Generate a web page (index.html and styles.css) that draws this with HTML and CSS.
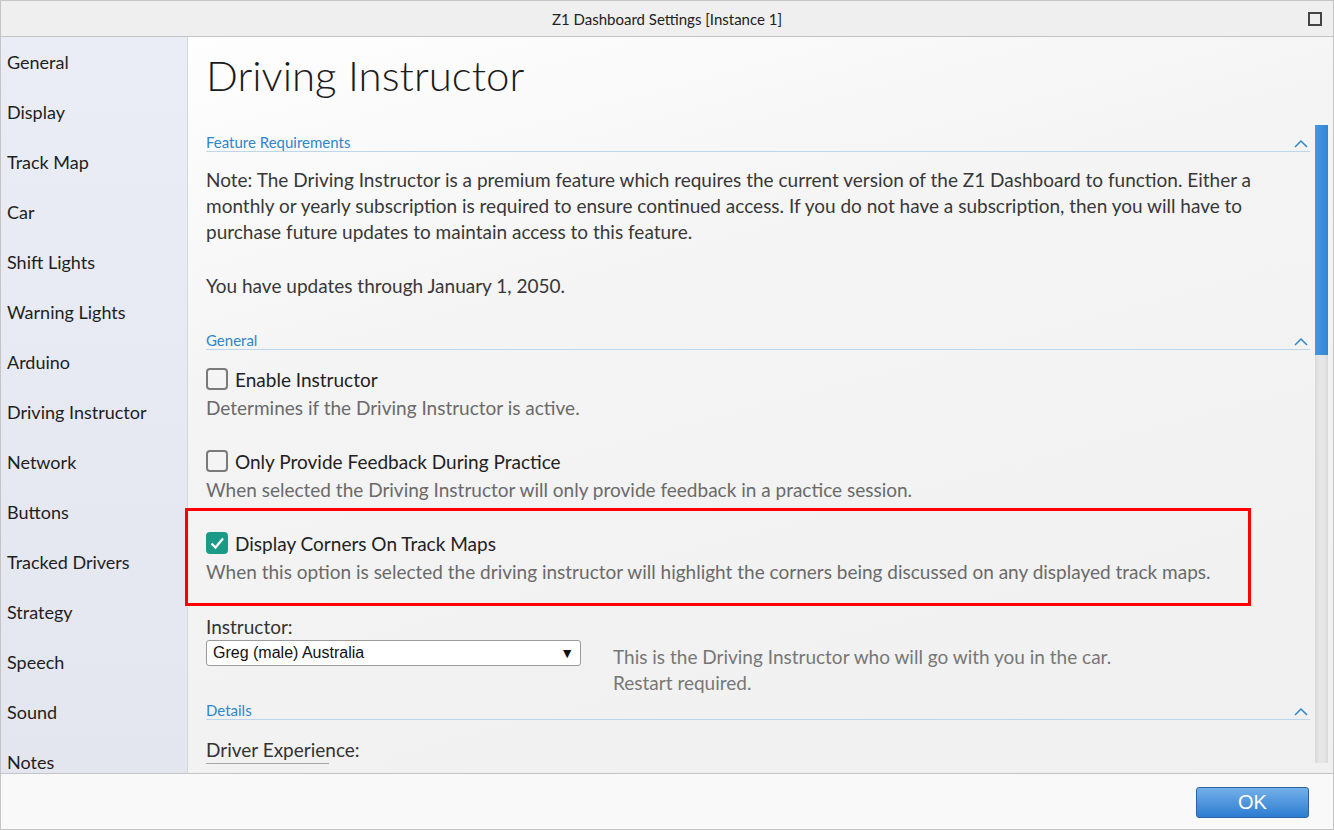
FILE: index.html
```html
<!DOCTYPE html>
<html lang="en">
<head>
    <meta charset="UTF-8">
    <title>Z1 Dashboard Settings [Instance 1]</title>
    <link rel="stylesheet" href="styles.css">
</head>
<body>
    <div class="window">
        <div class="titlebar">
            <span class="title">Z1 Dashboard Settings [Instance 1]</span>
            <span class="maximize"></span>
        </div>

        <div class="main">
            <div class="sidebar">
                <div class="nav-item">General</div>
                <div class="nav-item">Display</div>
                <div class="nav-item">Track Map</div>
                <div class="nav-item">Car</div>
                <div class="nav-item">Shift Lights</div>
                <div class="nav-item">Warning Lights</div>
                <div class="nav-item">Arduino</div>
                <div class="nav-item">Driving Instructor</div>
                <div class="nav-item">Network</div>
                <div class="nav-item">Buttons</div>
                <div class="nav-item">Tracked Drivers</div>
                <div class="nav-item">Strategy</div>
                <div class="nav-item">Speech</div>
                <div class="nav-item">Sound</div>
                <div class="nav-item">Notes</div>
            </div>

            <div class="content">
                <h1>Driving Instructor</h1>
                <div class="scroll">
                    <div class="panel">
                        <div class="section-head section-first">
                            <span>Feature Requirements</span>
                            <svg class="chevron" width="14" height="9" viewBox="0 0 14 9"><path d="M1 8 L7 2 L13 8" fill="none" stroke="#2f86c8" stroke-width="1.5"/></svg>
                        </div>
                        <p class="note">Note: The Driving Instructor is a premium feature which requires the current version of the Z1 Dashboard to function. Either a monthly or yearly subscription is required to ensure continued access. If you do not have a subscription, then you will have to purchase future updates to maintain access to this feature.</p>
                        <p class="note note-updates">You have updates through January 1, 2050.</p>

                        <div class="section-head section-general">
                            <span>General</span>
                            <svg class="chevron" width="14" height="9" viewBox="0 0 14 9"><path d="M1 8 L7 2 L13 8" fill="none" stroke="#2f86c8" stroke-width="1.5"/></svg>
                        </div>

                        <div class="option option-first">
                            <label class="check-row"><span class="checkbox"></span>Enable Instructor</label>
                            <div class="option-desc">Determines if the Driving Instructor is active.</div>
                        </div>
                        <div class="option option-second">
                            <label class="check-row"><span class="checkbox"></span>Only Provide Feedback During Practice</label>
                            <div class="option-desc">When selected the Driving Instructor will only provide feedback in a practice session.</div>
                        </div>

                        <div class="highlight">
                            <div class="option">
                                <label class="check-row"><span class="checkbox checked"><svg width="18" height="18" viewBox="0 0 18 18"><path d="M3.5 9.5 L7.5 13.5 L15 4.5" fill="none" stroke="#fff" stroke-width="2.2"/></svg></span>Display Corners On Track Maps</label>
                                <div class="option-desc">When this option is selected the driving instructor will highlight the corners being discussed on any displayed track maps.</div>
                            </div>
                        </div>

                        <div class="field-label">Instructor:</div>
                        <div class="select-row">
                            <div class="select">
                                <span>Greg (male) Australia</span>
                                <span class="arrow">&#9660;</span>
                            </div>
                            <div class="select-desc">This is the Driving Instructor who will go with you in the car.<br>Restart required.</div>
                        </div>

                        <div class="section-head section-details">
                            <span>Details</span>
                            <svg class="chevron" width="14" height="9" viewBox="0 0 14 9"><path d="M1 8 L7 2 L13 8" fill="none" stroke="#2f86c8" stroke-width="1.5"/></svg>
                        </div>
                        <div class="field-label field-experience">Driver Experience:</div>
                        <div class="experience-box"></div>
                    </div>
                    <div class="scrollbar">
                        <div class="scroll-thumb"></div>
                    </div>
                </div>
            </div>
        </div>

        <div class="footer">
            <button class="ok-button">OK</button>
        </div>
    </div>
</body>
</html>
```

FILE: styles.css
```css
body {
    margin: 0;
    font-family: 'Lato', 'Noto Sans', sans-serif;
    color: #222;
    overflow: hidden;
}
.window {
    width: 1334px;
    height: 830px;
    box-sizing: border-box;
    border: 1px solid #c4c4c4;
    display: flex;
    flex-direction: column;
}
.titlebar {
    height: 35px;
    flex: none;
    background-color: #efefef;
    border-bottom: 1px solid #c4c4c4;
    display: flex;
    align-items: center;
    justify-content: center;
    position: relative;
}
.title {
    font-size: 15px;
    color: #222;
}
.maximize {
    position: absolute;
    right: 11px;
    top: 11px;
    width: 10px;
    height: 10px;
    border: 2px solid #444;
}
.main {
    flex: 1;
    display: flex;
    overflow: hidden;
}
.sidebar {
    width: 186px;
    flex: none;
    background: linear-gradient(180deg, #eaedf6, #e3e6ee);
    border-right: 1px solid #d4d8e0;
}
.nav-item {
    height: 50px;
    line-height: 50px;
    padding-left: 6px;
    font-size: 18px;
    color: #1e1e1e;
}
.content {
    flex: 1;
    display: flex;
    flex-direction: column;
    background: linear-gradient(165deg, #fefefe 0%, #f4f4f4 35%, #f0f0f0 100%);
    min-width: 0;
}
h1 {
    margin: 0;
    height: 88px;
    line-height: 76px;
    padding-left: 18px;
    font-size: 42px;
    font-weight: 300;
    color: #1a1a1a;
    flex: none;
}
.scroll {
    flex: 1;
    display: flex;
    min-height: 0;
}
.panel {
    flex: 1;
    padding-left: 18px;
}
.section-head {
    display: flex;
    justify-content: space-between;
    align-items: flex-end;
    height: 18px;
    line-height: 18px;
    font-size: 15px;
    color: #2f86c8;
    border-bottom: 1px solid #bcd6ec;
}
.chevron {
    margin-right: 2px;
    margin-bottom: 3px;
}
.section-first {
    margin-top: 8px;
}
.note {
    margin: 15px 0 0 0;
    font-size: 19px;
    line-height: 26px;
    color: #383838;
}
.note-updates {
    margin-top: 28px;
}
.section-general {
    margin-top: 32px;
}
.option-first {
    margin-top: 16px;
}
.option-second {
    margin-top: 27px;
}
.check-row {
    display: flex;
    align-items: center;
    height: 26px;
    font-size: 19px;
    color: #222;
}
.checkbox {
    width: 18px;
    height: 18px;
    border: 2px solid #7a7a7a;
    border-radius: 4px;
    margin-right: 7px;
    display: flex;
    align-items: center;
    justify-content: center;
}
.checkbox.checked {
    background-color: #1b9a88;
    border-color: #1b9a88;
}
.option-desc {
    margin-top: 3px;
    font-size: 19px;
    line-height: 26px;
    color: #6a6a6a;
}
.highlight {
    margin: 5px 0 0 -21px;
    width: 1042px;
    border: 3px solid #ff0000;
    padding: 19px 0 18px 18px;
}
.field-label {
    margin-top: 8px;
    font-size: 19px;
    line-height: 26px;
    color: #333;
}
.select-row {
    display: flex;
    gap: 32px;
}
.select {
    width: 361px;
    height: 24px;
    border: 1px solid #9a9a9a;
    border-radius: 3px;
    background-color: #fff;
    display: flex;
    align-items: center;
    justify-content: space-between;
    padding: 0 6px;
    font-family: 'Liberation Sans', Arial, sans-serif;
    font-size: 16px;
    color: #111;
}
.arrow {
    font-size: 14px;
}
.select-desc {
    margin-top: 4px;
    font-size: 19px;
    line-height: 26px;
    color: #777;
}
.section-details {
    margin-top: 5px;
}
.field-experience {
    margin-top: 17px;
}
.experience-box {
    width: 123px;
    border-top: 1px solid #a8a8a8;
}
.scrollbar {
    width: 13px;
    margin: 0 5px 10px 5px;
    background: linear-gradient(90deg, #d8d8d8, #e6e6e6 30%, #e6e6e6 70%, #d8d8d8);
}
.scroll-thumb {
    height: 230px;
    background: linear-gradient(90deg, #4a96de, #2f86d6);
}
.footer {
    height: 55px;
    flex: none;
    border-top: 1px solid #c4c4c4;
    background-color: #f9f9f9;
    display: flex;
    justify-content: flex-end;
    align-items: flex-start;
}
.ok-button {
    margin: 13px 24px 0 0;
    width: 113px;
    height: 31px;
    border: 1px solid #2b62a4;
    border-radius: 3px;
    background: linear-gradient(180deg, #74b0e8, #2c7cd2);
    color: #fff;
    font-family: 'Liberation Sans', Arial, sans-serif;
    font-size: 20px;
    cursor: pointer;
}
```
